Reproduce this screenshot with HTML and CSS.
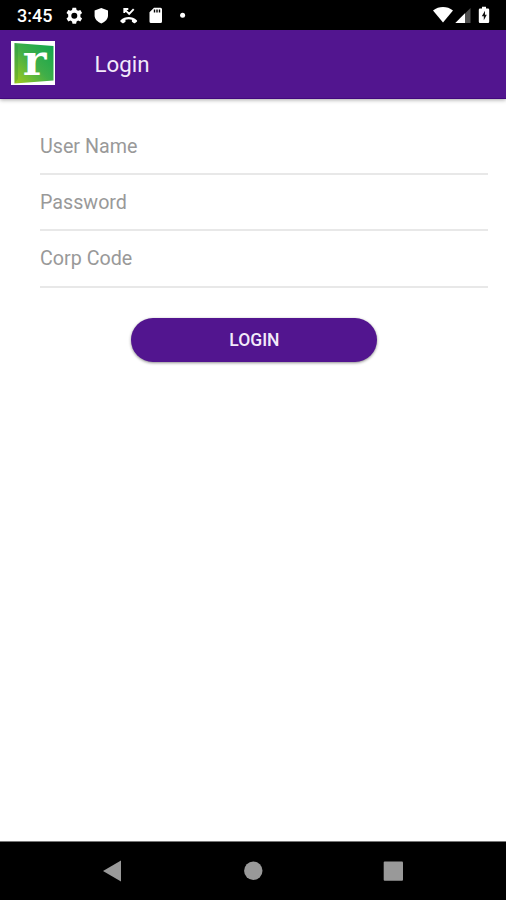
FILE: index.html
```html
<!DOCTYPE html>
<html lang="en">
<head>
<meta charset="utf-8">
<title>Login</title>
<link rel="stylesheet" href="styles.css">
</head>
<body>
<div class="screen">
  <div class="status">
    <span class="time">3:45</span>
    <svg class="notifications" width="130" height="30" viewBox="60 0 130 30" fill="#fff">
      <g transform="translate(74.3 15.7)">
        <path fill-rule="evenodd" d="M-1.8-8h3.6l.5 2.2 1.5.9 2.2-.9 1.8 3.1-1.7 1.5v2.4l1.7 1.5L6 5.8l-2.2-.9-1.5.9L1.800 8h-3.6l-.5-2.200-1.500-.9-2.200.9-1.800-3.100 1.700-1.500v-2.400l-1.700-1.500L-6-5.800l2.200.9 1.500-.9zM0-3A3 3 0 1 0 0 3 3 3 0 1 0 0-3z"/>
      </g>
      <path d="M101.300 8l6.700 2.500v5c0 3.500-2.600 6.200-6.700 8-4.100-1.800-6.700-4.500-6.700-8v-5z"/>
      <path d="M120.600 20.300c4.600-4.400 11.600-4.400 16.200 0 .5.500.5.900 0 1.400l-1.600 1.200c-.5.400-1 .3-1.500 0l-1.800-1.200v-2c-2.200-.7-4.200-.7-6.400 0v2l-1.800 1.200c-.5.300-1 .4-1.500 0l-1.600-1.200c-.5-.5-.5-.9 0-1.400z"/>
      <path d="M124.300 13V9h4M124.600 9.300l4.600 4.600 4.500-4.800" fill="none" stroke="#fff" stroke-width="1.900"/>
      <path fill-rule="evenodd" d="M154 7.700h6.500q1.500 0 1.500 1.500v12.300q0 1.500-1.500 1.500H151q-1.500 0-1.500-1.500v-9.300zM153.800 9.500v3h1.400v-3zm2.500 0v3h1.400v-3zm2.500 0v3h1.400v-3z"/>
      <circle cx="182.600" cy="15.200" r="2.500"/>
    </svg>
    <svg class="system" width="66" height="30" viewBox="430 0 66 30" fill="#fff">
      <path d="M433 10.500c6-4.600 14-4.600 20 0l-10 12z"/>
      <path d="M470.500 8v15h-15z" fill="#505050"/>
      <path d="M465 13.300V23h-9.700z"/>
      <path d="M482 6.800h4v1.800h2q1.200 0 1.200 1.200v12q0 1.200-1.200 1.200h-8q-1.200 0-1.200-1.200v-12q0-1.200 1.200-1.200h2z"/>
      <path d="M485 10.800l-3.200 5.400h2V20.300l3-5.500h-1.800z" fill="#111"/>
    </svg>
  </div>
  <header class="appbar">
    <div class="logo">
      <svg class="tile" width="44" height="44" viewBox="0 0 44 44">
        <defs>
          <linearGradient id="leaf" x1="1" y1="0" x2="0" y2="1">
            <stop offset="0" stop-color="#10a64e"/>
            <stop offset=".5" stop-color="#3fae49"/>
            <stop offset="1" stop-color="#a3cc1d"/>
          </linearGradient>
        </defs>
        <path d="M0 0h44v44H0z" fill="#fff"/>
        <path d="M3.500 2L42.500 5v34.500L3.500 42.500z" fill="url(#leaf)"/>
        <path d="M3.500 2L7 5v33l-3.500 4.500z" fill="#168342" opacity=".25"/>
      </svg>
      <span class="mark">r</span>
    </div>
    <h1 class="title">Login</h1>
  </header>
  <main class="form">
    <div class="field">User Name</div>
    <div class="field">Password</div>
    <div class="field">Corp Code</div>
    <button class="submit" type="button">LOGIN</button>
  </main>
  <nav class="navbar">
    <svg width="20" height="22" viewBox="0 0 20 22"><path d="M1 11L19 .5v21z" fill="#999"/></svg>
    <svg width="20" height="22" viewBox="0 0 20 22"><circle cx="10.300" cy="10.800" r="9.200" fill="#999"/></svg>
    <svg width="20" height="22" viewBox="0 0 20 22"><rect x=".7" y="1.500" width="19.300" height="19.300" rx="1" fill="#999"/></svg>
  </nav>
</div>
</body>
</html>
```
FILE: styles.css
```css
* { box-sizing: border-box; }
body { margin: 0; font-family: Roboto, "Liberation Sans", sans-serif; background: #fff; }
.screen { width: 506px; height: 900px; display: flex; flex-direction: column; overflow: hidden; }
.status { height: 30px; flex: none; display: flex; align-items: center; background: #000; padding: 0 10px 0 17px; }
.time { width: 43px; color: #fff; font-size: 18px; font-weight: 500; line-height: 30px; padding-top: 2px; }
.system { margin-left: auto; }
.appbar { height: 69px; flex: none; display: flex; align-items: center; padding: 0 11px 2px; background: #52158f; border-bottom: 1px solid #42087d; box-shadow: 0 1px 4px rgba(0, 0, 0, .35); }
.logo { display: grid; width: 44px; height: 44px; }
.tile, .mark { grid-area: 1 / 1; }
.mark { justify-self: center; color: #fff; font: bold 42px/50px "DejaVu Serif", serif; margin-top: -5px; transform: translateX(1.5px) scaleX(1.070); }
.title { margin: 2px 0 0 39.500px; color: #f3eafa; font-size: 22.3px; font-weight: 400; line-height: 28px; }
.form { flex: 1; padding: 20px 18px 0 40px; display: flex; flex-direction: column; }
.field { height: 56.200px; border-bottom: 2px solid #e8e8e8; color: #999; font-size: 19.7px; line-height: 55px; }
.submit { width: 246px; height: 44px; margin: 30.400px 0 0 91.400px; padding: 0; border: 0; border-radius: 22px; background: #52158f; color: #f3eafa; font: 500 17.5px/44px Roboto, "Liberation Sans", sans-serif; box-shadow: 0 1px 3px rgba(0, 0, 0, .45); }
.navbar { height: 59px; flex: none; display: flex; justify-content: space-between; padding: 18px 103px 0 102px; background: #000; border-top: 1px solid #777; }
```
